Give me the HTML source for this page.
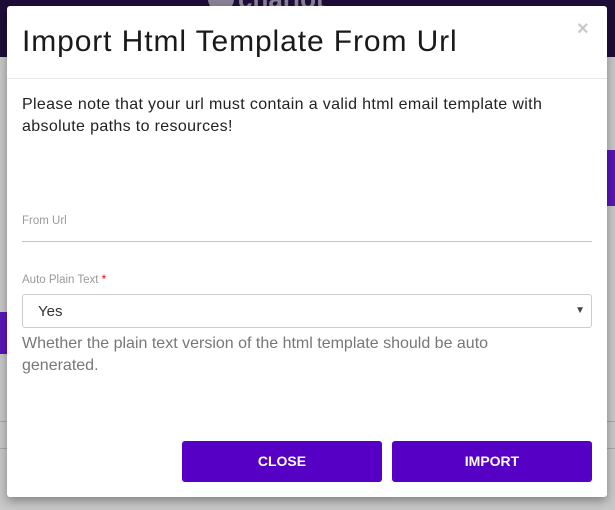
<!DOCTYPE html>
<html><head><style>
html,body{margin:0;padding:0;width:615px;height:510px;overflow:hidden;font-family:"Liberation Sans",sans-serif;}
body{background:#c8c8c8;position:relative;}
.top{position:absolute;left:0;top:0;width:615px;height:57px;background:#1e0d38;}
.logo{position:absolute;left:208px;top:-14px;width:26px;height:26px;border-radius:50%;background:#8a8296;}
.logotext{position:absolute;left:238px;top:-16px;color:#8a8296;font-size:26px;font-weight:bold;}
.rp{position:absolute;left:607px;top:150px;width:8px;height:56px;background:#5a16b8;}
.lp{position:absolute;left:0;top:312px;width:7px;height:42px;background:#5a16b8;}
.ln{position:absolute;left:0;width:615px;height:1px;background:#a8a8a8;}
.modal{position:absolute;left:7px;top:6px;width:600px;height:491px;background:#fff;border-radius:3px;box-shadow:0 4px 10px rgba(0,0,0,.35);}
.title{position:absolute;left:15px;top:19px;font-size:30px;font-weight:300;color:#1a1a1a;letter-spacing:0.9px;}
.x{position:absolute;left:570px;top:12px;font-size:20px;color:#c8c8c8;font-weight:bold;}
.hr{position:absolute;left:0;top:72px;width:600px;height:1px;background:#e6e6e6;}
.note{position:absolute;left:15px;top:88px;font-size:16px;line-height:22px;color:#222;width:580px;letter-spacing:0.35px;}
.lbl{position:absolute;left:15px;font-size:11.5px;color:#9a9a9a;}
.uline{position:absolute;left:15px;top:235px;width:570px;height:1px;background:#c4c4c4;}
.sel{position:absolute;left:15px;top:288px;width:568px;height:32px;border:1px solid #ccc;border-radius:3px;font-size:15px;color:#333;}
.sel span{position:absolute;left:15px;top:8px;}
.sel i{position:absolute;right:6px;top:10px;font-style:normal;font-size:10px;color:#444;}
.help{position:absolute;left:15px;top:327px;font-size:16px;line-height:22px;color:#777;width:520px;}
.btn{position:absolute;top:435px;width:200px;height:41px;background:#5500c4;color:#fff;font-weight:bold;font-size:14px;text-align:center;line-height:41px;border-radius:3px;}
</style></head><body>
<div class="top"><div class="logo"></div><div class="logotext">chariot</div></div>
<div class="rp"></div><div class="lp"></div>
<div class="ln" style="top:421px"></div><div class="ln" style="top:448px"></div>
<div class="modal">
<div class="title">Import Html Template From Url</div>
<div class="x">×</div>
<div class="hr"></div>
<div class="note">Please note that your url must contain a valid html email template with absolute paths to resources!</div>
<div class="lbl" style="top:209px">From Url</div>
<div class="uline"></div>
<div class="lbl" style="top:268px">Auto Plain Text <span style="color:#e00">*</span></div>
<div class="sel"><span>Yes</span><i>▼</i></div>
<div class="help">Whether the plain text version of the html template should be auto generated.</div>
<div class="btn" style="left:175px">CLOSE</div>
<div class="btn" style="left:385px">IMPORT</div>
</div>
</body></html>
